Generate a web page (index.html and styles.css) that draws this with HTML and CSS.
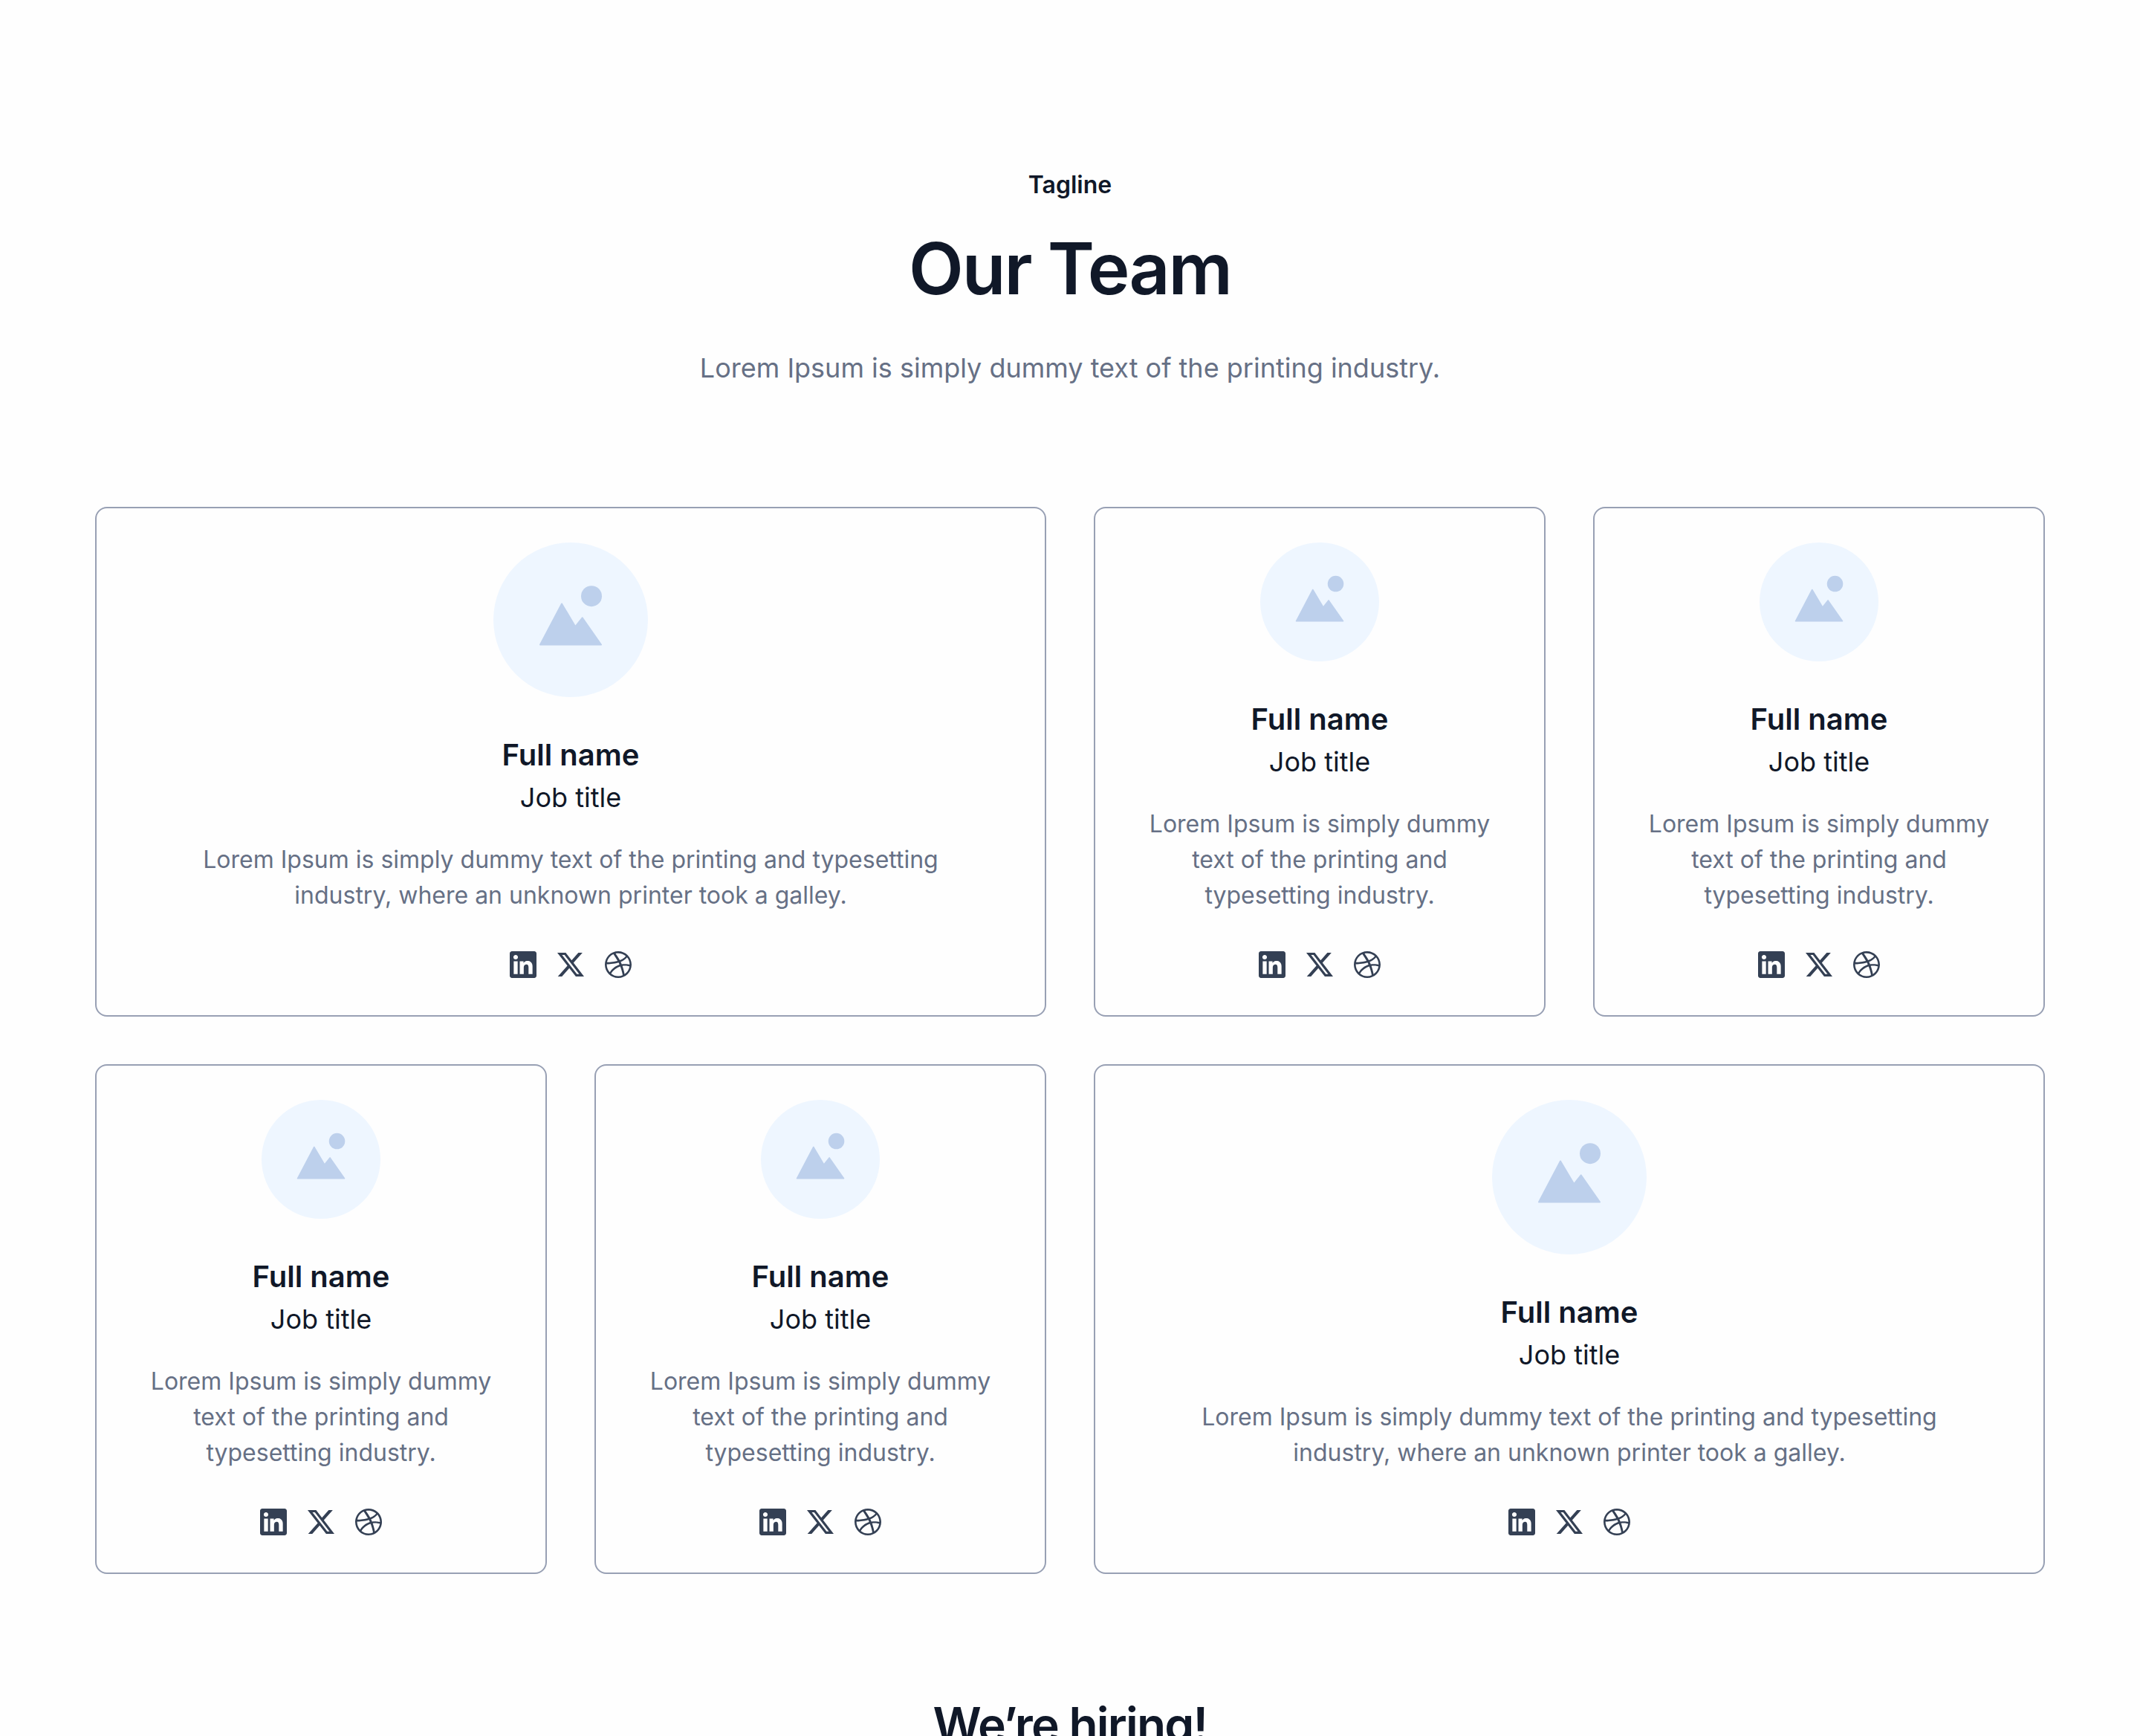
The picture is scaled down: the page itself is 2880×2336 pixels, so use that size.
FILE: index.html
```html
<!DOCTYPE html>
<html lang="en">
<head>
    <meta charset="UTF-8">
    <meta name="viewport" content="width=device-width, initial-scale=1.0">
    <title>Our Team</title>
    <link rel="stylesheet" href="styles.css">
</head>
<body>
    <!-- Shared icons -->
    <svg class="sprite" aria-hidden="true">
        <symbol id="placeholder" viewBox="0 0 208 208">
            <path d="M92 82.500L110.300 113.200L119.700 101.300L145 137.500H63Z" fill="#bdd0ec" stroke="#bdd0ec" stroke-width="2" stroke-linejoin="round"/>
            <circle cx="132" cy="72.200" r="14" fill="#bdd0ec"/>
        </symbol>
        <symbol id="linkedin" viewBox="0 0 24 24">
            <path fill-rule="evenodd" d="M4.5 3C3.67157 3 3 3.67157 3 4.5V19.5C3 20.3284 3.67157 21 4.5 21H19.5C20.3284 21 21 20.3284 21 19.5V4.5C21 3.67157 20.3284 3 19.5 3H4.5ZM8.52076 7.00272C8.52639 7.95897 7.81061 8.54819 6.96123 8.54397C6.16107 8.53975 5.46357 7.90272 5.46779 7.00413C5.47201 6.15897 6.13998 5.47975 7.00764 5.49944C7.88795 5.51913 8.52639 6.1646 8.52076 7.00272ZM12.2797 9.76176H9.7583V18.3216H12.4217V18.1219C12.4217 16.728 12.417 15.333 12.4246 13.9397C12.426 13.6936 12.4372 13.4377 12.5005 13.2028C12.7381 12.3253 13.5271 11.7586 14.4074 11.8979C14.9727 11.9864 15.3467 12.3141 15.5042 12.8471C15.6013 13.1803 15.6449 13.5389 15.6491 13.8863C15.6605 15.304 15.6561 16.721 15.6561 18.3202H18.328V18.1149C18.328 16.533 18.325 14.951 18.3294 13.3702C18.3308 12.8597 18.276 12.3563 18.1508 11.8627C17.9638 11.1286 17.5771 10.5211 16.9485 10.0824C16.5027 9.77019 16.0133 9.5691 15.4663 9.5466C15.126 9.532 14.78 9.493 14.4467 9.56066C13.6817 9.71394 13.0096 10.0641 12.5019 10.6814L12.2797 10.9557V9.76176ZM5.68164 18.3244H8.33242V9.76733H5.68164V18.3244Z"/>
        </symbol>
        <symbol id="x" viewBox="0 0 24 24">
            <path d="M17.1761 4H19.9362L13.9061 10.7774L21 20H15.4456L11.0951 14.4066L6.11723 20H3.35544L9.80517 12.7508L3 4H8.69545L12.6279 9.11262L17.1761 4ZM16.2073 18.3754H17.7368L7.86441 5.53928H6.2232L16.2073 18.3754Z"/>
        </symbol>
        <symbol id="dribbble" viewBox="-4 -4 32 32">
            <path d="M12 24C5.385 24 0 18.615 0 12S5.385 0 12 0s12 5.385 12 12-5.385 12-12 12zm10.12-10.358c-.35-.11-3.17-.953-6.384-.438 1.34 3.684 1.887 6.684 1.992 7.308 2.3-1.555 3.936-4.02 4.395-6.87zm-6.115 7.808c-.153-.9-.75-4.032-2.19-7.77l-.066.02c-5.79 2.015-7.86 6.025-8.04 6.4 1.73 1.358 3.92 2.166 6.29 2.166 1.42 0 2.77-.29 4-.814zm-11.62-2.58c.232-.4 3.045-5.055 8.332-6.765.135-.045.27-.084.405-.12-.26-.585-.54-1.167-.832-1.74C7.17 11.775 2.206 11.71 1.756 11.7l-.004.312c0 2.633.998 5.037 2.634 6.855zm-2.42-8.955c.46.008 4.683.026 9.477-1.248-1.698-3.018-3.53-5.558-3.8-5.928-2.868 1.35-5.01 3.99-5.676 7.17zM9.6 2.052c.282.38 2.145 2.914 3.822 6 3.645-1.365 5.19-3.44 5.373-3.702-1.81-1.61-4.19-2.586-6.795-2.586-.825 0-1.63.1-2.4.285zm10.335 3.483c-.218.29-1.935 2.493-5.724 4.04.24.49.47.985.68 1.486.08.18.15.36.22.53 3.41-.43 6.8.26 7.14.33-.02-2.42-.88-4.64-2.31-6.38z"/>
        </symbol>
    </svg>

    <main class="team">
        <header class="team-header">
            <p class="tagline">Tagline</p>
            <h1>Our Team</h1>
            <p class="subtitle">Lorem Ipsum is simply dummy text of the printing industry.</p>
        </header>

        <div class="team-grid">
            <article class="card card-wide">
                <svg class="avatar"><use href="#placeholder"/></svg>
                <h2>Full name</h2>
                <p class="job">Job title</p>
                <p class="bio">Lorem Ipsum is simply dummy text of the printing and typesetting industry, where an unknown printer took a galley.</p>
                <div class="social">
                    <svg><use href="#linkedin"/></svg>
                    <svg><use href="#x"/></svg>
                    <svg><use href="#dribbble"/></svg>
                </div>
            </article>
            <article class="card">
                <svg class="avatar"><use href="#placeholder"/></svg>
                <h2>Full name</h2>
                <p class="job">Job title</p>
                <p class="bio">Lorem Ipsum is simply dummy text of the printing and typesetting industry.</p>
                <div class="social">
                    <svg><use href="#linkedin"/></svg>
                    <svg><use href="#x"/></svg>
                    <svg><use href="#dribbble"/></svg>
                </div>
            </article>
            <article class="card">
                <svg class="avatar"><use href="#placeholder"/></svg>
                <h2>Full name</h2>
                <p class="job">Job title</p>
                <p class="bio">Lorem Ipsum is simply dummy text of the printing and typesetting industry.</p>
                <div class="social">
                    <svg><use href="#linkedin"/></svg>
                    <svg><use href="#x"/></svg>
                    <svg><use href="#dribbble"/></svg>
                </div>
            </article>
            <article class="card">
                <svg class="avatar"><use href="#placeholder"/></svg>
                <h2>Full name</h2>
                <p class="job">Job title</p>
                <p class="bio">Lorem Ipsum is simply dummy text of the printing and typesetting industry.</p>
                <div class="social">
                    <svg><use href="#linkedin"/></svg>
                    <svg><use href="#x"/></svg>
                    <svg><use href="#dribbble"/></svg>
                </div>
            </article>
            <article class="card">
                <svg class="avatar"><use href="#placeholder"/></svg>
                <h2>Full name</h2>
                <p class="job">Job title</p>
                <p class="bio">Lorem Ipsum is simply dummy text of the printing and typesetting industry.</p>
                <div class="social">
                    <svg><use href="#linkedin"/></svg>
                    <svg><use href="#x"/></svg>
                    <svg><use href="#dribbble"/></svg>
                </div>
            </article>
            <article class="card card-wide">
                <svg class="avatar"><use href="#placeholder"/></svg>
                <h2>Full name</h2>
                <p class="job">Job title</p>
                <p class="bio">Lorem Ipsum is simply dummy text of the printing and typesetting industry, where an unknown printer took a galley.</p>
                <div class="social">
                    <svg><use href="#linkedin"/></svg>
                    <svg><use href="#x"/></svg>
                    <svg><use href="#dribbble"/></svg>
                </div>
            </article>
        </div>

        <h2 class="hiring">We’re hiring!</h2>
    </main>
</body>
</html>
```

FILE: styles.css
```css
* {
    box-sizing: border-box;
    margin: 0;
    padding: 0;
}
body {
    font-family: Inter, sans-serif;
    font-size: 32px;
    line-height: 48px;
    color: #101828;
    background: #fefefe;
    height: 2336px;
    overflow: hidden;
}
.sprite {
    display: none;
}
.team {
    padding: 225px 128px 0;
    text-align: center;
}
.team-header {
    margin-bottom: 160px;
}
.tagline {
    font-weight: 600;
    margin-bottom: 30px;
}
h1 {
    font-size: 96px;
    font-weight: 600;
    line-height: 116px;
    letter-spacing: -0.021em;
    margin-bottom: 49px;
}
.subtitle {
    font-size: 36px;
    line-height: 54px;
    color: #667085;
}
.team-grid {
    display: grid;
    grid-template-columns: repeat(4, 1fr);
    gap: 64px;
}
.card {
    display: flex;
    flex-direction: column;
    align-items: center;
    padding: 46px 46px 44px;
    border: 2px solid #98a0b4;
    border-radius: 16px;
}
.card-wide {
    grid-column: span 2;
}
.avatar {
    width: 160px;
    height: 160px;
    margin-bottom: 48px;
    border-radius: 50%;
    background: #eef6ff;
}
.card-wide .avatar {
    width: 208px;
    height: 208px;
}
.card h2 {
    font-size: 40px;
    font-weight: 600;
    line-height: 60px;
}
.job {
    font-size: 36px;
    line-height: 54px;
    margin-bottom: 33px;
}
.bio {
    max-width: 500px;
    margin-bottom: 45px;
    color: #667085;
}
.card-wide .bio {
    max-width: 1088px;
}
.social {
    display: flex;
    gap: 16px;
    fill: #344054;
}
.social svg {
    width: 48px;
    height: 48px;
}
.hiring {
    margin-top: 161px;
    font-size: 64px;
    font-weight: 600;
    line-height: 84px;
    letter-spacing: -0.028em;
}
```
